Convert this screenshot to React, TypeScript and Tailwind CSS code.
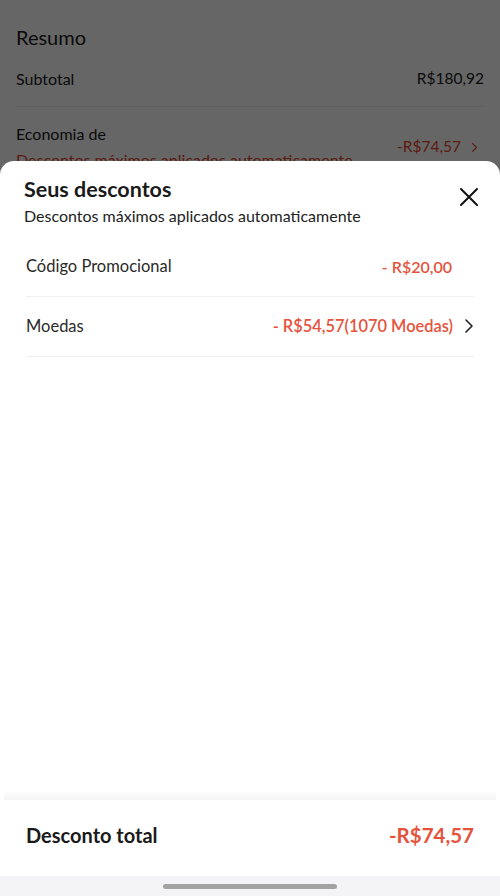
import React from 'react';

const font = { fontFamily: 'Lato, "Noto Sans", sans-serif' };

const CloseIcon = () => (
  <svg width="22" height="22" viewBox="0 0 22 22" fill="none" stroke="#111" strokeWidth="2" strokeLinecap="round">
    <path d="M3 3L19 19M19 3L3 19" />
  </svg>
);

const Chevron = ({ className = '' }: { className?: string }) => (
  <svg width="10" height="16" viewBox="0 0 10 16" fill="none" stroke="currentColor" strokeWidth="1.6" strokeLinecap="round" strokeLinejoin="round" className={className}>
    <path d="M2 2L8 8L2 14" />
  </svg>
);

export default function App() {
  return (
    <div className="relative h-[896px] w-[500px] overflow-hidden bg-white text-[#1a1a1a]" style={font}>
      {/* underlying page */}
      <div className="px-4 pt-[23px]">
        <h2 className="text-[20px] leading-[28px]">Resumo</h2>
        <div className="flex items-center justify-between h-[56px] border-b border-[#eee]">
          <span className="text-[16px]">Subtotal</span>
          <span className="text-[15.5px]">R$180,92</span>
        </div>
        <div className="flex items-center justify-between pt-[16px]">
          <div>
            <div className="text-[16px] leading-[22px]">Economia de</div>
            <div className="text-[16px] leading-[22px] mt-[4px] text-[#e0452b]">Descontos máximos aplicados automaticamente</div>
          </div>
          <div className="flex items-center gap-[10px] pr-[6px] text-[#e0452b] text-[15.5px]">
            -R$74,57
            <Chevron className="w-[7px] h-[11px]" />
          </div>
        </div>
      </div>

      {/* dim overlay */}
      <div className="absolute inset-0 bg-black/60" />

      {/* bottom sheet */}
      <div className="absolute left-0 right-0 bottom-0 top-[161px] flex flex-col bg-white rounded-t-[14px]">
        <div className="flex justify-between pl-6 pr-[20px] pt-[14px]">
          <div>
            <h1 className="text-[21.5px] leading-[28px] font-bold text-[#1a1a1a]">Seus descontos</h1>
            <p className="text-[16px] leading-[26px] text-[#222]">Descontos máximos aplicados automaticamente</p>
          </div>
          <div className="pt-[11px]">
            <CloseIcon />
          </div>
        </div>

        <div className="mx-[26px] mt-[8px]">
          <div className="flex items-center justify-between h-[60px] border-b border-[#f0f0f0] pr-[22px]">
            <span className="text-[16.5px] text-[#2a2a2a]">Código Promocional</span>
            <span className="text-[16px] font-semibold text-[#e5533d]">- R$20,00</span>
          </div>
          <div className="flex items-center justify-between h-[60px] border-b border-[#f0f0f0]">
            <span className="text-[16.5px] text-[#2a2a2a]">Moedas</span>
            <span className="flex items-center gap-[11px]">
              <span className="text-[16.4px] font-semibold text-[#e5533d]">- R$54,57(1070 Moedas)</span>
              <Chevron className="text-[#222]" />
            </span>
          </div>
        </div>

        <div className="flex-1" />

        <div className="h-[10px] bg-gradient-to-b from-white to-[#f4f4f4] mx-[4px]" />
        <div className="flex items-center justify-between h-[76px] px-[26px] pb-[6px] bg-white">
          <span className="text-[20px] font-bold text-[#1a1a1a]">Desconto total</span>
          <span className="text-[20.5px] font-bold text-[#e5533d]">-R$74,57</span>
        </div>
        <div className="h-[20px] bg-[#f4f4f6] flex justify-center pt-[8px]">
          <div className="w-[174px] h-[5px] rounded-full bg-[#a3a3a3]" />
        </div>
      </div>
    </div>
  );
}
